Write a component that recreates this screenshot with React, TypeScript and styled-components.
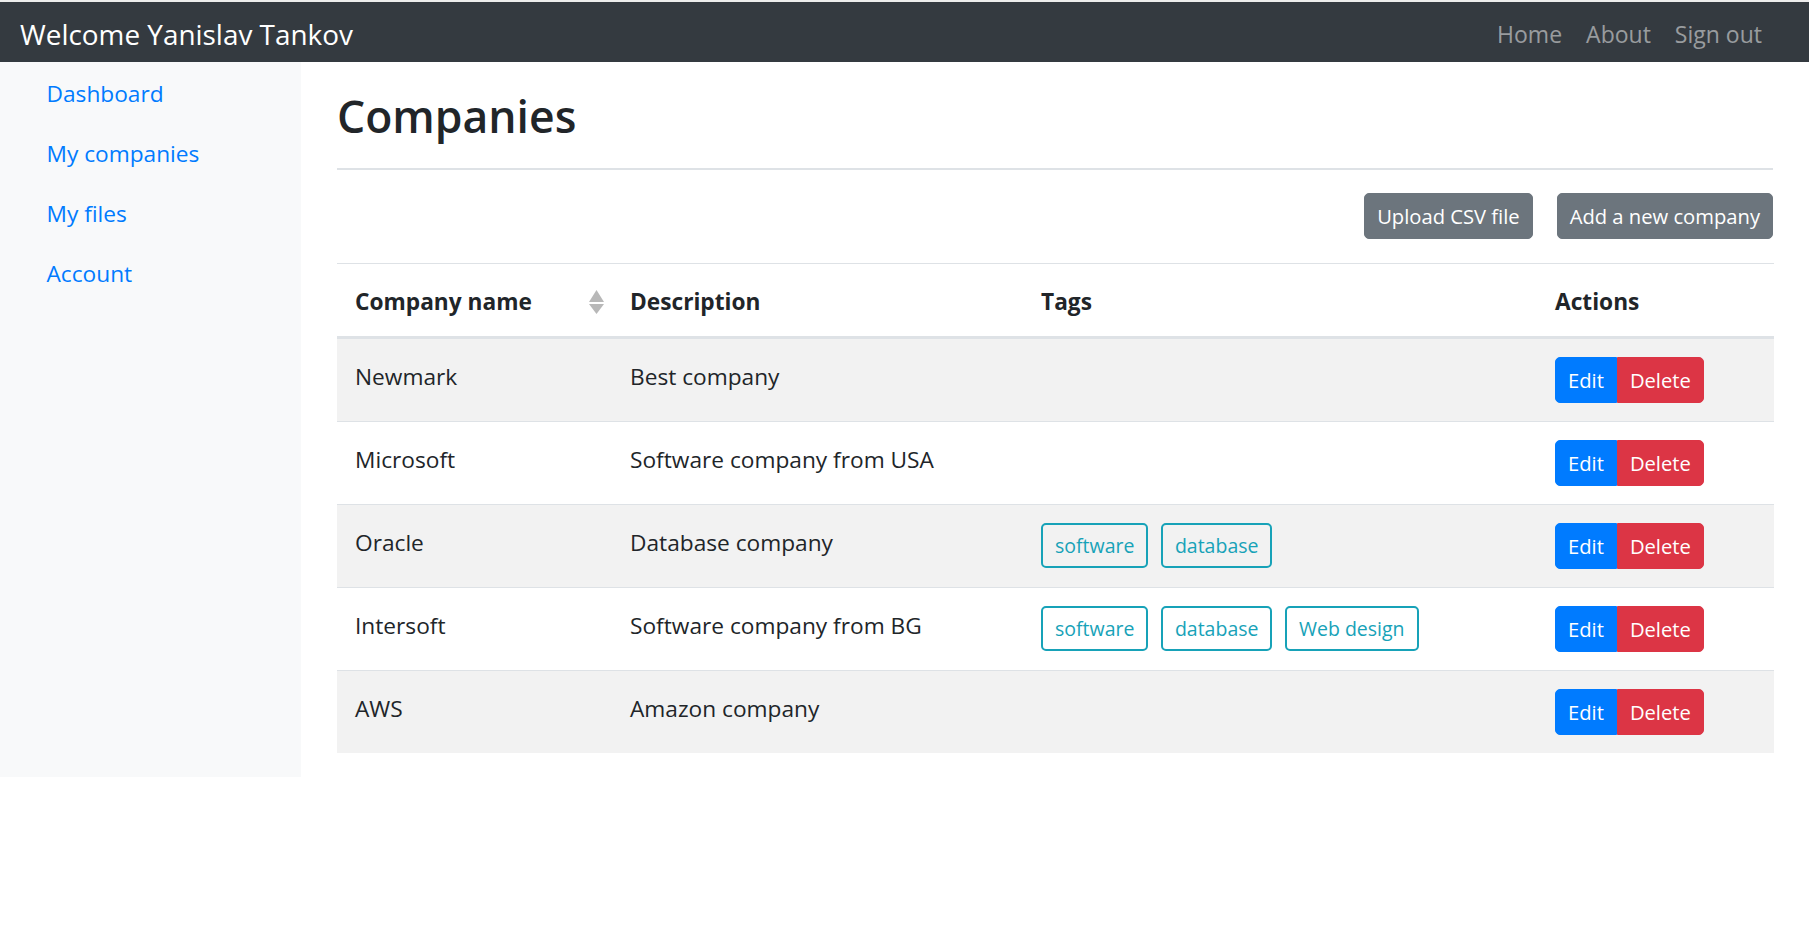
import React from "react";
import styled, { createGlobalStyle } from "styled-components";

const GlobalStyle = createGlobalStyle`
  html, body { margin: 0; padding: 0; background: #fff; }
  body {
    font-family: "Open Sans", "Noto Sans", "Liberation Sans", sans-serif;
    font-size: 22.7px;
    line-height: 36px;
    color: #212529;
  }
  * { box-sizing: border-box; }
`;

const Page = styled.div`
  display: flex;
  flex-direction: column;
`;

const Navbar = styled.nav`
  display: flex;
  align-items: center;
  justify-content: space-between;
  height: 62px;
  padding: 0 35px 0 20px;
  background: #343a40;
  border-top: 2px solid #ececec;
`;

const Brand = styled.a`
  color: #fff;
  font-size: 27.9px;
  line-height: 36px;
  padding-top: 3px;
  text-decoration: none;
`;

const NavLinks = styled.div`
  display: flex;
  align-items: center;
`;

const NavLink = styled.a`
  color: rgba(255, 255, 255, 0.5);
  font-size: 23px;
  line-height: 36px;
  padding: 3px 12px 0;
  text-decoration: none;
`;

const Layout = styled.div`
  display: flex;
  align-items: stretch;
`;

const Sidebar = styled.aside`
  width: 301px;
  flex: 0 0 301px;
  background: #f8f9fa;
  padding: 0 22.5px;
`;

const SideLink = styled.a`
  display: block;
  color: #007bff;
  font-size: 22.7px;
  line-height: 36px;
  padding: 14px 24px 10px;
  text-decoration: none;
`;

const Main = styled.main`
  flex: 1;
  min-width: 0;
  padding: 0 36px;
`;

const Header = styled.div`
  padding: 24px 0 12px;
  border-bottom: 2px solid #dee2e6;
  margin-bottom: 23px;
`;

const Title = styled.h2`
  margin: 0 0 12px;
  padding-top: 2px;
  font-size: 44.5px;
  line-height: 55.6px;
  font-weight: 600;
  color: #212529;
`;

const Toolbar = styled.div`
  display: flex;
  justify-content: flex-end;
  gap: 24px;
  margin-bottom: 24px;
`;

const Button = styled.button<{ $variant: "secondary" | "primary" | "danger"; $group?: "left" | "right" }>`
  font-family: inherit;
  font-size: 20.2px;
  line-height: 32px;
  padding: 6px 12px;
  border: 1px solid transparent;
  color: #fff;
  cursor: pointer;
  background: ${(p) =>
    p.$variant === "secondary" ? "#6c757d" : p.$variant === "primary" ? "#007bff" : "#dc3545"};
  border-color: ${(p) =>
    p.$variant === "secondary" ? "#6c757d" : p.$variant === "primary" ? "#007bff" : "#dc3545"};
  border-radius: ${(p) =>
    p.$group === "left" ? "5px 0 0 5px" : p.$group === "right" ? "0 5px 5px 0" : "5px"};
`;

const BtnGroup = styled.div`
  display: inline-flex;
`;

const Table = styled.table`
  width: 100%;
  border-collapse: collapse;
  table-layout: fixed;
  margin-bottom: 24px;
`;

const Th = styled.th<{ $w: number }>`
  width: ${(p) => p.$w}px;
  text-align: left;
  font-weight: 700;
  font-size: 22.7px;
  line-height: 36px;
  padding: 20px 18px 16px;
  border-top: 1px solid #dee2e6;
  border-bottom: 3px solid #dee2e6;
  vertical-align: bottom;
`;

const SortHead = styled.div`
  display: flex;
  align-items: center;
  justify-content: space-between;
  margin-right: -10px;
`;

const Row = styled.tr`
  &:nth-of-type(odd) {
    background: #f2f2f2;
  }
`;

const Td = styled.td`
  padding: 18px;
  font-size: 22.7px;
  line-height: 36px;
  vertical-align: top;
  border-top: 1px solid #dee2e6;
  color: #212529;
`;

const CellText = styled.div`
  padding-top: 2px;
`;

const Tags = styled.div`
  display: flex;
  gap: 12.5px;
`;

const Tag = styled.span`
  display: inline-block;
  font-size: 19.5px;
  line-height: 29px;
  padding: 6px 12px;
  border: 2px solid #17a2b8;
  border-radius: 5px;
  color: #17a2b8;
`;

const SortIcon = () => (
  <svg width="15" height="24" viewBox="0 0 15 24" aria-hidden="true">
    <polygon points="0,12 7.5,0 15,12" fill="#b8b8b8" />
    <polygon points="0,14 15,14 7.5,24" fill="#b8b8b8" />
  </svg>
);

const rows = [
  { name: "Newmark", desc: "Best company", tags: [] as string[] },
  { name: "Microsoft", desc: "Software company from USA", tags: [] as string[] },
  { name: "Oracle", desc: "Database company", tags: ["software", "database"] },
  { name: "Intersoft", desc: "Software company from BG", tags: ["software", "database", "Web design"] },
  { name: "AWS", desc: "Amazon company", tags: [] as string[] },
];

export default function App() {
  return (
    <>
      <GlobalStyle />
      <Page>
        <Navbar>
          <Brand href="#">Welcome Yanislav Tankov</Brand>
          <NavLinks>
            <NavLink href="#">Home</NavLink>
            <NavLink href="#">About</NavLink>
            <NavLink href="#">Sign out</NavLink>
          </NavLinks>
        </Navbar>
        <Layout>
          <Sidebar>
            <SideLink href="#">Dashboard</SideLink>
            <SideLink href="#">My companies</SideLink>
            <SideLink href="#">My files</SideLink>
            <SideLink href="#">Account</SideLink>
          </Sidebar>
          <Main>
            <Header>
              <Title>Companies</Title>
            </Header>
            <Toolbar>
              <Button $variant="secondary">Upload CSV file</Button>
              <Button $variant="secondary">Add a new company</Button>
            </Toolbar>
            <Table>
              <thead>
                <tr>
                  <Th $w={275}>
                    <SortHead>
                      <span>Company name</span>
                      <SortIcon />
                    </SortHead>
                  </Th>
                  <Th $w={411}>Description</Th>
                  <Th $w={514}>Tags</Th>
                  <Th $w={237}>Actions</Th>
                </tr>
              </thead>
              <tbody>
                {rows.map((r) => (
                  <Row key={r.name}>
                    <Td>
                      <CellText>{r.name}</CellText>
                    </Td>
                    <Td>
                      <CellText>{r.desc}</CellText>
                    </Td>
                    <Td>
                      <Tags>
                        {r.tags.map((t) => (
                          <Tag key={t}>{t}</Tag>
                        ))}
                      </Tags>
                    </Td>
                    <Td>
                      <BtnGroup>
                        <Button $variant="primary" $group="left">Edit</Button>
                        <Button $variant="danger" $group="right">Delete</Button>
                      </BtnGroup>
                    </Td>
                  </Row>
                ))}
              </tbody>
            </Table>
          </Main>
        </Layout>
      </Page>
    </>
  );
}
